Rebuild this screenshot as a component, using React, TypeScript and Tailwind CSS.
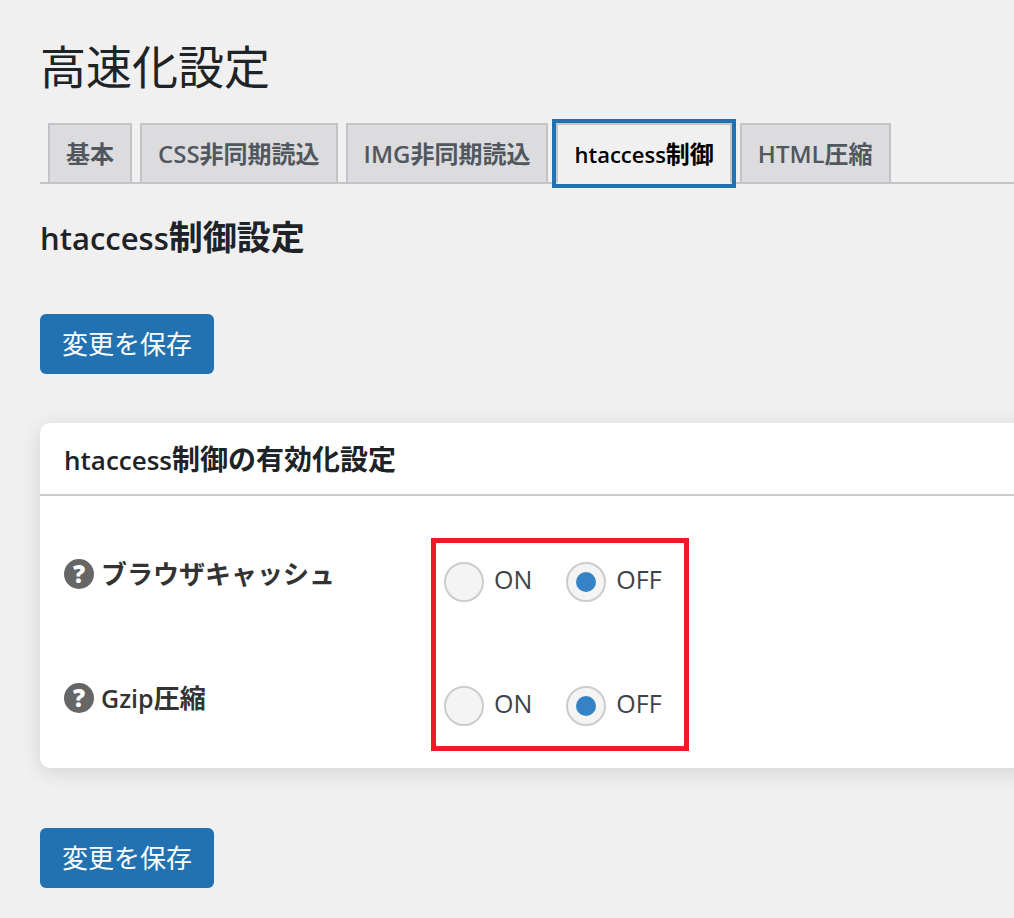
import React from "react";

const tabs = [
  { latin: "", text: "基本" },
  { latin: "CSS", text: "非同期読込" },
  { latin: "IMG", text: "非同期読込" },
  { latin: "htaccess", text: "制御", active: true },
  { latin: "HTML", text: "圧縮" },
];

const settings = [
  { id: "browser-cache", latin: "", text: "ブラウザキャッシュ" },
  { id: "gzip", latin: "Gzip", text: "圧縮" },
];

function SaveButton() {
  return (
    <button
      type="submit"
      className="flex h-[60px] items-center self-start rounded-md bg-[#2271b1] px-[22px] text-[26px] leading-10 text-white"
    >
      変更を保存
    </button>
  );
}

function HelpMark() {
  return (
    <span className="flex size-[30px] shrink-0 items-center justify-center rounded-full bg-[#666666] font-['Open_Sans',sans-serif] text-2xl leading-none font-extrabold text-white">
      ?
    </span>
  );
}

function Choice({ name, text, checked }: { name: string; text: string; checked?: boolean }) {
  return (
    <label className="flex items-center gap-2.5 text-[25px] leading-8 text-[#3c434a]">
      <input
        type="radio"
        name={name}
        defaultChecked={checked}
        className="grid size-10 shrink-0 appearance-none place-items-center rounded-full border-2 border-[#cccccc] bg-[#f4f4f4] before:size-5 before:rounded-full checked:before:bg-[#3582c4]"
      />
      <span className="pb-1.5">{text}</span>
    </label>
  );
}

export default function App() {
  return (
    <form className="flex min-h-screen flex-col overflow-x-hidden bg-[#f0f0f0] pt-9 pb-[30px] pl-10 font-['Open_Sans','Noto_Sans_CJK_JP',sans-serif] text-[#1d2327]">
      <h1 className="text-[46px] leading-[60px]">高速化設定</h1>

      <nav className="mt-[27px] flex items-start gap-2 border-b-2 border-[#c3c4c7] pl-2">
        {tabs.map(({ latin, text, active }) => (
          <a
            key={latin + text}
            href="#"
            aria-current={active ? "page" : undefined}
            className={
              "border-2 px-4 py-3 text-2xl leading-[33px] font-semibold whitespace-nowrap " +
              (active
                ? "relative -mb-0.5 border-[#c3c4c7] border-b-[#f0f0f0] bg-[#f0f0f0] text-black outline-4 outline-[#2271b1]"
                : "border-[#c3c4c7] border-b-0 bg-[#dcdcde] text-[#50575e]")
            }
          >
            <span className={active ? "text-[22px] leading-none" : undefined}>{latin}</span>
            {text}
          </a>
        ))}
      </nav>

      <h2 className="mt-[29px] mb-[53px] text-[34px] leading-[48px] font-semibold">
        <span className="text-[31px] leading-none">htaccess</span>制御設定
      </h2>

      <SaveButton />

      <section className="mt-[49px] -mr-10 mb-[60px] rounded-l-[10px] bg-white shadow-[0_4px_20px_rgba(0,0,0,0.12)]">
        <h3 className="border-b-2 border-[#cccccc] px-6 pt-4 pb-[15px] text-[28px] leading-10 font-semibold">
          <span className="text-[26px] leading-none">htaccess</span>制御の有効化設定
        </h3>
        <div className="relative flex flex-col gap-[76px] px-6 pt-[58px] pb-[42px]">
          {settings.map(({ id, latin, text }) => (
            <div key={id} role="radiogroup" aria-labelledby={id} className="flex items-start">
              <div className="flex w-[380px] shrink-0 items-center gap-[7px] text-[#333333]">
                <HelpMark />
                <span id={id} className="text-[26px] leading-10 font-semibold">
                  <span className="text-[25px] leading-none">{latin}</span>
                  {text}
                </span>
              </div>
              <div className="flex gap-[34px] pt-2">
                <Choice name={id} text="ON" />
                <Choice name={id} text="OFF" checked />
              </div>
            </div>
          ))}
          <div className="pointer-events-none absolute top-[42px] left-[391px] h-[213px] w-[258px] border-5 border-[#ed1c24]" />
        </div>
      </section>

      <SaveButton />
    </form>
  );
}
